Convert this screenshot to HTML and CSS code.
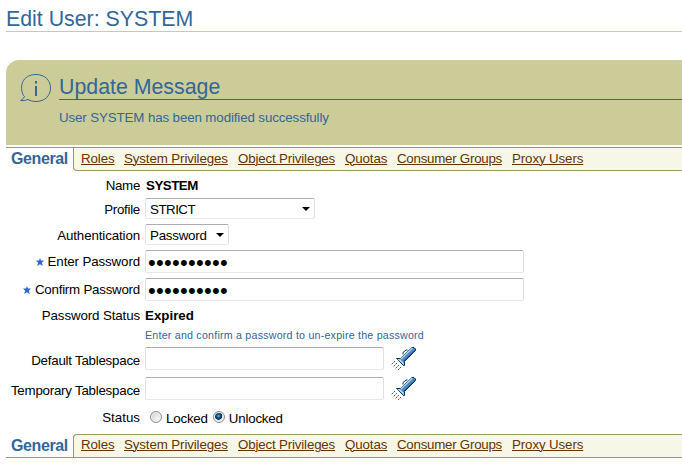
FILE: index.html
```html
<!DOCTYPE html>
<html lang="en">
<head>
<meta charset="utf-8">
<title>Edit User: SYSTEM</title>
<link rel="stylesheet" href="styles.css">
</head>
<body>
<svg class="symbols" aria-hidden="true">
  <symbol id="torch" viewBox="0 0 26 26">
    <path d="M12 8.5V6.5L15 4H16.5" fill="none" stroke="#003366"/>
    <path d="M5.5 12.5H9.5L21 1.5H23L24.5 3V4.5L13.5 15.5V19.5H12.5Z" fill="#4c86bf" stroke="#003366"/>
    <path d="M6 13H9L13 17V19Z" fill="#b5d7ef"/>
    <path d="M10 13L21.5 2" stroke="#a9d2f3" stroke-width="1.5"/>
    <path d="M12.5 15.5L24 4.2" stroke="#23568d"/>
    <path d="M4 15L.5 18.5M6 17L2.5 20.5M8 19L4.5 22.5M10 21L7 24" fill="none" stroke="#336699" stroke-dasharray="2 .7"/>
  </symbol>
</svg>
<h1 class="title">Edit User: SYSTEM</h1>
<section class="message">
  <svg class="info" viewBox="0 0 32 30" width="32" height="30">
    <path d="M3.5 22.5C-1 14 2 1.5 16 1.5C25 1.5 30.5 7.5 30.5 15C30.5 22.5 25 28.5 16 28.5Q11 28.5 8 26.5Q4 28.3 .7 27.5Q4 25.5 4.5 23.5Z" fill="none" stroke="#336699"/>
    <path d="M16 8V10.5M16 13V23" stroke="#336699" stroke-width="2"/>
  </svg>
  <div class="message-body">
    <h2>Update Message</h2>
    <p>User SYSTEM has been modified successfully</p>
  </div>
</section>
<nav class="tabs top">
  <b>General</b>
  <div class="links"><a class="l1">Roles</a><a class="l2">System Privileges</a><a class="l3">Object Privileges</a><a class="l4">Quotas</a><a class="l5">Consumer Groups</a><a class="l6">Proxy Users</a></div>
</nav>
<main class="form">
  <div class="row r-name"><label><span class="t1">Name</span></label><b class="v1">SYSTEM</b></div>
  <div class="row r-profile"><label><span class="t2">Profile</span></label><div class="field select wide"><span class="v2">STRICT</span><i></i></div></div>
  <div class="row r-auth"><label><span class="t3">Authentication</span></label><div class="field select short"><span class="v3">Password</span><i></i></div></div>
  <div class="row r-enter"><label><svg class="star" viewBox="0 0 8 8"><path d="M4 0L5 2.6L8 2.6L5.9 4.7L6.8 8L4 6.2L1.2 8L2.1 4.7L0 2.6H3Z"/></svg><span class="t4">Enter Password</span></label><div class="field long"><span class="dots">••••••••••</span></div></div>
  <div class="row r-confirm"><label><svg class="star" viewBox="0 0 8 8"><path d="M4 0L5 2.6L8 2.6L5.9 4.7L6.8 8L4 6.2L1.2 8L2.1 4.7L0 2.6H3Z"/></svg><span class="t5">Confirm Password</span></label><div class="field long"><span class="dots">••••••••••</span></div></div>
  <div class="row r-pstatus"><label><span class="t6">Password Status</span></label><b class="v4">Expired</b></div>
  <div class="row r-hint"><label></label><small>Enter and confirm a password to un-expire the password</small></div>
  <div class="row r-default"><label><span class="t7">Default Tablespace</span></label><div class="field medium"></div><svg class="torch"><use href="#torch"/></svg></div>
  <div class="row r-temp"><label><span class="t8">Temporary Tablespace</span></label><div class="field medium"></div><svg class="torch"><use href="#torch"/></svg></div>
  <div class="row r-status"><label><span class="t9">Status</span></label><i class="radio"></i><span class="option o1">Locked</span><i class="radio on"></i><span class="option o2">Unlocked</span></div>
</main>
<nav class="tabs bottom">
  <b>General</b>
  <div class="links"><a class="l1">Roles</a><a class="l2">System Privileges</a><a class="l3">Object Privileges</a><a class="l4">Quotas</a><a class="l5">Consumer Groups</a><a class="l6">Proxy Users</a></div>
</nav>
</body>
</html>
```
FILE: styles.css
```css
* { box-sizing: border-box; }
body { margin: 0 0 0 6px; background: #fff; color: #000; font: 13.33px/16px "Liberation Sans", Arial, sans-serif; overflow: hidden; white-space: nowrap; }
.symbols { display: block; width: 0; height: 0; }
h1, h2, p { margin: 0; font-weight: normal; color: #336699; }
.title { height: 32px; padding-top: 7px; border-bottom: 1px solid #cccc99; font-size: 21.33px; line-height: 24px; }
.message { display: flex; height: 85px; margin-top: 28px; padding: 13px 0 0 14px; background: #cccc99; border-radius: 13px 0 0 0; }
.info { flex: none; }
.message-body { flex: 1; margin-left: 7px; }
h2 { height: 27px; padding-top: 2px; font-size: 21.33px; line-height: 24px; border-bottom: 1px solid #336699; }
.message p { margin-top: 10px; letter-spacing: -.12px; }
.tabs { display: flex; height: 24px; color: #336699; }
.tabs.top { margin-top: 2px; border-top: 1px solid #999966; }
.tabs.bottom { border-bottom: 1px solid #999966; }
.tabs b { width: 67px; padding: 2px 0 0 5px; font-size: 16px; line-height: 18px; letter-spacing: -.38px; }
.tabs.bottom b { padding-top: 3px; }
.links { flex: 1; display: grid; grid-template-columns: 43px 114px 107px 52px 115px 100px; padding-left: 7px; background: #f7f7e7; border-left: 1px solid #999966; }
.top .links { padding-top: 3px; border-bottom: 1px solid #999966; border-radius: 0 0 0 4px; }
.bottom .links { padding-top: 2px; border-top: 1px solid #999966; border-radius: 4px 0 0 0; }
.links a { justify-self: start; color: #663300; text-decoration: underline; text-underline-offset: 1px; text-decoration-thickness: 1px; }
.l1, .l2, .l4, .l6 { letter-spacing: -.12px; }
.l3 { letter-spacing: -.17px; }
.l5 { letter-spacing: -.26px; }
.form { height: 263px; padding-top: 3px; }
.row { display: flex; align-items: center; }
label { display: flex; align-items: center; justify-content: flex-end; width: 134px; margin-right: 5px; padding-top: 1px; }
.r-name { height: 22px; }
.r-profile { height: 25px; }
.r-auth { height: 27px; }
.r-enter { height: 27px; }
.r-confirm { height: 29px; }
.r-pstatus { height: 22px; }
.r-hint { height: 18px; }
.r-default { height: 29px; }
.r-temp { height: 31px; }
.r-status { height: 26px; }
.r-profile label, .r-auth label { padding-top: 3px; }
.r-default label, .r-temp label { padding-top: 4px; }
.t1 { letter-spacing: -.3px; }
.t2 { letter-spacing: -.28px; }
.t3, .t4, .t6 { letter-spacing: -.12px; }
.t5, .t7, .t8 { letter-spacing: -.24px; }
.row b { padding-top: 2px; }
.v1 { margin-left: 1px; letter-spacing: -.5px; }
.v2, .v3 { padding-top: 2px; }
.v2 { letter-spacing: -.5px; }
.v3 { letter-spacing: -.24px; }
.field { display: flex; align-items: center; height: 23px; border: 1px solid #e3e9ef; border-top-color: #abadb3; border-left-color: #e2e3ea; border-right-color: #dbdfe6; border-radius: 2px; padding-left: 4px; }
.select { height: 21px; justify-content: space-between; padding-right: 4px; }
.select i { width: 0; height: 0; margin-top: 1px; border: 4px solid transparent; border-top-color: #000; border-bottom: 0; }
.wide { width: 170px; }
.short { width: 84px; }
.long { width: 379px; padding-left: 2px; }
.medium { width: 239px; }
.dots { padding-top: 2px; font-size: 22px; letter-spacing: .3px; }
.star { width: 8px; height: 8px; margin-right: 4px; fill: #3366cc; }
small { font-size: 10.67px; color: #336699; letter-spacing: .22px; }
.torch { width: 26px; height: 26px; margin-left: 7px; }
.radio { width: 12px; height: 12px; margin-left: 5px; border: 1px solid #8e8f8f; border-radius: 50%; background: radial-gradient(circle at 65% 65%, #f6f6f6, #c4c8cc); box-shadow: inset 0 0 0 1px #f4f4f4; }
.radio.on { background: radial-gradient(circle at 45% 40%, #7bd1ee 0, #196393 18%, #0b2f4a 42%, #e0e5e8 50%); }
.option { margin-left: 4px; padding-top: 3px; }
.o1, .o2 { letter-spacing: -.2px; }
```
